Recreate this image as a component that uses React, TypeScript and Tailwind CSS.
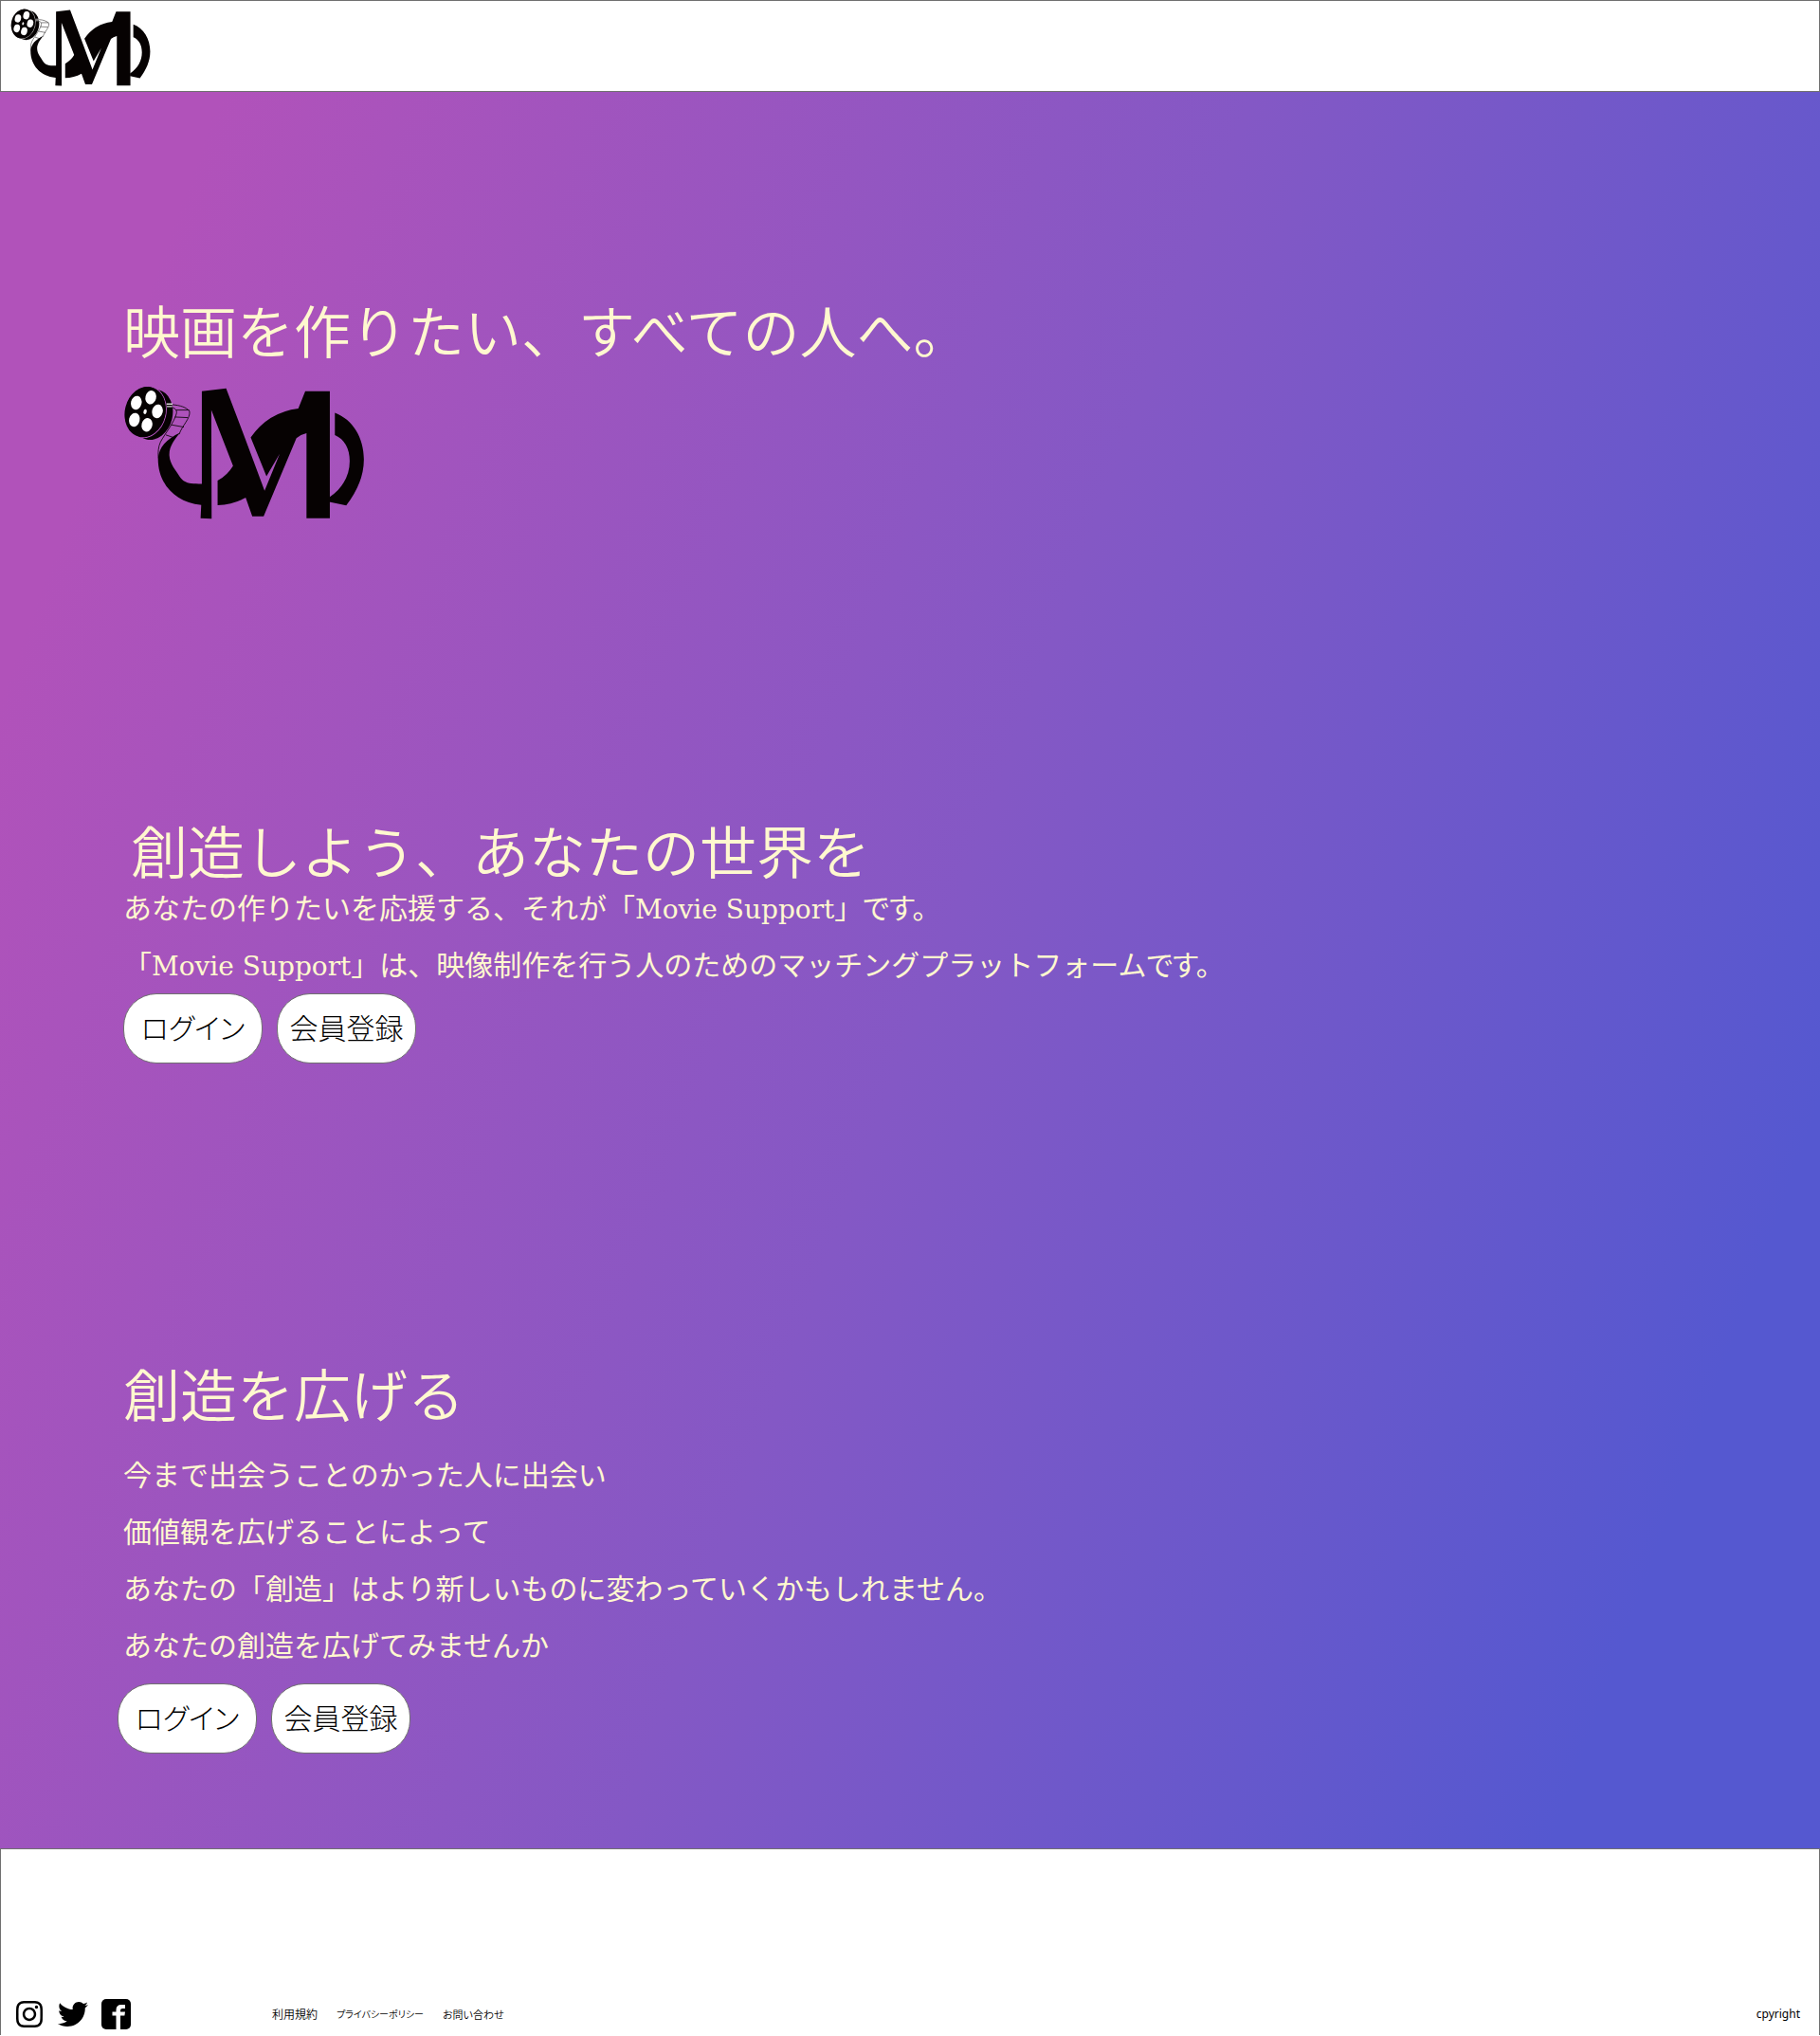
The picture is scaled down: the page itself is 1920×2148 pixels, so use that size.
import { FaInstagram, FaTwitter } from "react-icons/fa";

const REEL_HOLES = [
  [69, 90],
  [115, 73],
  [136, 117],
  [63, 144],
  [103, 160],
];

function Logo({ className, gap }: { className: string; gap: string }) {
  return (
    <svg viewBox="28 36 766 424" className={className} role="img" aria-label="Movie Support">
      <g fill="#060202">
        <path d="M277 53 L354 44 L413 200 L476 369 L524 252 L482 323 L432 200 Q487 120 583 108 L605 53 H683 V456 H609 V186 Q590 190 577 202 L473 450 H437 L416 391 Q375 413 327 415 V337 Q358 320 376 290 L307 113 L308 458 L273 456 L275 414 C190 406 138 345 138 268 C140 232 165 205 208 185 C190 207 172 230 174 258 C176 285 192 300 207 325 C221 345 235 347 277 347 Z" />
        <path d="M699 122 C755 143 791 200 791 270 C791 325 768 372 735 416 L681 404 V390 C725 360 746 320 746 275 C746 235 730 205 699 192 Z" />
        <ellipse cx="120" cy="127" rx="64" ry="81" transform="rotate(14 120 127)" />
      </g>
      <ellipse cx="98" cy="119" rx="65" ry="82" transform="rotate(14 98 119)" fill="#060202" className={gap} strokeWidth="3" />
      <ellipse cx="97" cy="119" rx="64" ry="81" transform="rotate(14 97 119)" fill="#060202" />
      <g fill="#ffffff">
        {REEL_HOLES.map(([x, y]) => (
          <ellipse key={x} cx={x} cy={y} rx="17" ry="22" transform={`rotate(14 ${x} ${y})`} />
        ))}
        <ellipse cx="97" cy="118" rx="5" ry="8" transform="rotate(14 97 118)" />
      </g>
      <path d="M165 94 H184 M166 102 H183" stroke="#d8d8d8" strokeWidth="4" fill="none" />
      <g stroke="#060202" strokeWidth="2.5" fill="none">
        <path d="M184 96 C208 98 228 104 238 117 C241 140 214 163 205 190" />
        <path d="M184 105 C193 108 198 114 197 122 C191 150 160 188 146 214 C138 230 138 250 139 266" />
        <path d="M195 113 H237 M191 135 L232 137 M181 160 L220 167 M163 192 L187 200" />
      </g>
    </svg>
  );
}

function FacebookIcon() {
  return (
    <svg viewBox="0 0 31 32" className="h-8 w-[31px]" aria-hidden="true">
      <rect width="31" height="32" rx="5" fill="#000" />
      <path d="M15.5 32 V17.5 H11.5 V13.5 H15.5 V11.5 Q15.5 6 21 6 H25 V10 H22.2 Q20 10 20 12 V13.5 H25 L24.4 17.5 H20 V32 Z" fill="#fff" />
    </svg>
  );
}

function ActionButtons() {
  const style =
    "h-[74px] w-[147px] rounded-[35px] border border-[#707070] bg-white pb-1 text-3xl font-light text-black [font-feature-settings:'palt']";
  return (
    <div className="flex gap-[15px]">
      <button type="button" className={style}>ログイン</button>
      <button type="button" className={style}>会員登録</button>
    </div>
  );
}

function Brand() {
  return <span className="font-['DejaVu_Serif'] text-[28px] leading-none">Movie Support</span>;
}

export default function App() {
  return (
    <div className="font-['Noto_Sans_CJK_JP',sans-serif]">
      <header className="h-[97px] border border-[#707070] bg-white pt-2 pl-[10px]">
        <a href="#top" className="block w-fit">
          <Logo className="h-[82px] w-[148px]" gap="stroke-white" />
        </a>
      </header>

      <main
        id="top"
        className="bg-[linear-gradient(110deg,#b152ba_9%,#8458c5_51%,#5558d0_89%)] pt-[223px] pr-8 pb-[100px] pl-[130px] text-[#fff8cf]"
      >
        <section>
          <h1 className="text-6xl leading-[54px] font-[350]">映画を作りたい、すべての人へ。</h1>
          <Logo className="mt-[33px] h-[141px] w-[255px]" gap="stroke-[#b052bb]" />
        </section>

        <section className="mt-[321px]">
          <h2 className="pl-2 text-6xl leading-[54px] font-[350]">創造しよう、あなたの世界を</h2>
          <p className="mt-[3px] text-3xl leading-[60px]">
            あなたの作りたいを応援する、それが「<Brand />」<span className="[font-feature-settings:'palt']">です。</span>
            <br />「<Brand />」は、映像制作を行う人のためのマッチングプラットフォーム<span className="[font-feature-settings:'palt']">です。</span>
          </p>
          <div className="mt-[2px]">
            <ActionButtons />
          </div>
        </section>

        <section className="mt-[320px]">
          <h2 className="text-6xl leading-[54px] font-[350]">創造を広げる</h2>
          <p className="mt-7 text-3xl leading-[60px]">
            今まで出会うことのかった人に出会い
            <br />
            価値観を広げることによって
            <br />
            あなたの「創造」はより新しいものに変わっていくかもしれません。
            <br />
            あなたの創造を広げてみませんか
          </p>
          <div className="mt-3 -ml-[6px]">
            <ActionButtons />
          </div>
        </section>
      </main>

      <footer className="flex h-[197px] items-end border border-b-0 border-[#707070] bg-white pr-5 pb-[6px] pl-[14px] text-xs text-black">
        <div className="flex w-[272px] items-center gap-[14px]">
          <a href="#instagram" aria-label="Instagram">
            <FaInstagram className="size-8" />
          </a>
          <a href="#twitter" aria-label="Twitter">
            <FaTwitter className="size-8" />
          </a>
          <a href="#facebook" aria-label="Facebook">
            <FacebookIcon />
          </a>
        </div>
        <nav className="flex h-8 items-center gap-5 font-[350] [font-feature-settings:'palt']">
          <a href="#terms">利用規約</a>
          <a href="#privacy" className="text-[10px]">プライバシーポリシー</a>
          <a href="#contact" className="text-[11px]">お問い合わせ</a>
        </nav>
        <p className="ml-auto font-['Noto_Sans',sans-serif] leading-8">cpyright</p>
      </footer>
    </div>
  );
}
